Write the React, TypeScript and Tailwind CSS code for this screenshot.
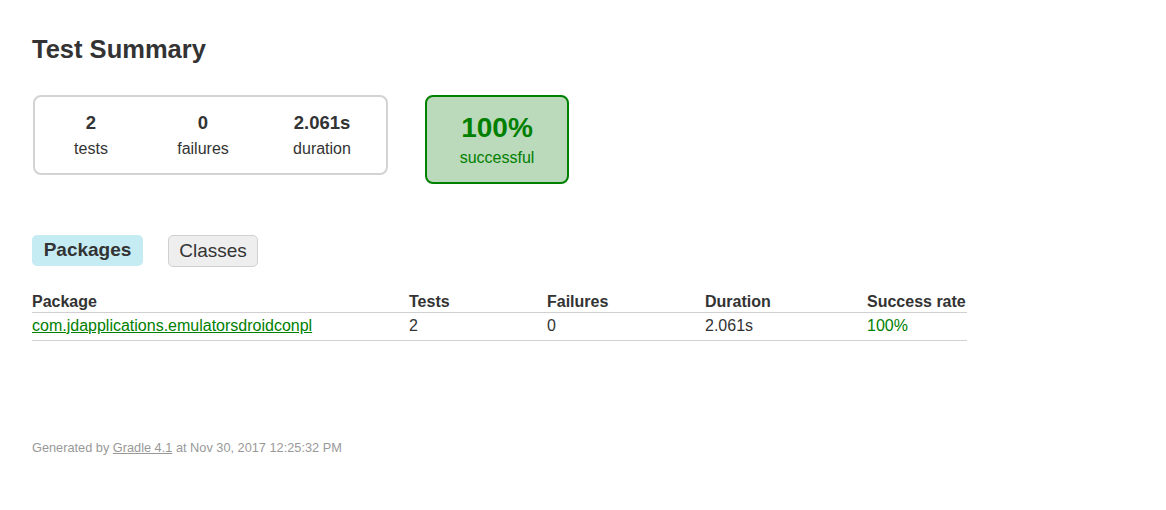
export default function App() {
  return (
    <div className="min-h-[510px] bg-white px-[32px] pt-[34px] font-['Liberation_Sans',Arial,sans-serif] text-[#333]">
      <h1 className="text-[25.5px] font-bold leading-[30px]">Test Summary</h1>

      <div className="mt-[31px] flex items-start gap-[37px]">
        <div className="ml-[1px] flex h-[80px] w-[355px] items-center rounded-[8px] border-2 border-[#d3d3d3]">
          <div className="w-[112px] text-center">
            <div className="text-[18.5px] font-bold leading-[22px]">2</div>
            <div className="mt-[5px] text-[16px] leading-[20px]">tests</div>
          </div>
          <div className="w-[112px] text-center">
            <div className="text-[18.5px] font-bold leading-[22px]">0</div>
            <div className="mt-[5px] text-[16px] leading-[20px]">failures</div>
          </div>
          <div className="w-[126px] text-center">
            <div className="text-[18.5px] font-bold leading-[22px]">2.061s</div>
            <div className="mt-[5px] text-[16px] leading-[20px]">duration</div>
          </div>
        </div>

        <div className="flex h-[89px] w-[144px] flex-col items-center justify-center rounded-[8px] border-2 border-[#008000] bg-[#bbd9bb] pt-[1px] text-[#008000]">
          <div className="text-[28px] font-bold leading-[30px]">100%</div>
          <div className="mt-[5px] text-[16px] leading-[20px]">successful</div>
        </div>
      </div>

      <div className="mt-[51px] flex items-start gap-[25px]">
        <div className="flex h-[31px] w-[111px] items-center justify-center rounded-[5px] bg-[#c5ecf3] text-[19px] font-bold">
          Packages
        </div>
        <div className="flex h-[32px] w-[90px] items-center justify-center rounded-[5px] border border-[#d0d0d0] bg-[#eeeeee] text-[19px]">
          Classes
        </div>
      </div>

      <table className="mt-[25px] w-[935px] border-collapse text-[16px]">
        <thead>
          <tr className="border-b border-[#d0d0d0] text-left">
            <th className="w-[377px] pb-0 font-bold leading-[20px]">Package</th>
            <th className="w-[138px] pb-0 font-bold leading-[20px]">Tests</th>
            <th className="w-[158px] pb-0 font-bold leading-[20px]">Failures</th>
            <th className="w-[162px] pb-0 font-bold leading-[20px]">Duration</th>
            <th className="pb-0 font-bold leading-[20px]">Success rate</th>
          </tr>
        </thead>
        <tbody>
          <tr className="border-b border-[#d0d0d0]">
            <td className="pt-[3px] pb-[4px] leading-[20px]">
              <a href="#" className="text-[#008000] underline">
                com.jdapplications.emulatorsdroidconpl
              </a>
            </td>
            <td className="pt-[3px] pb-[4px] leading-[20px]">2</td>
            <td className="pt-[3px] pb-[4px] leading-[20px]">0</td>
            <td className="pt-[3px] pb-[4px] leading-[20px]">2.061s</td>
            <td className="pt-[3px] pb-[4px] leading-[20px] text-[#008000]">100%</td>
          </tr>
        </tbody>
      </table>

      <p className="mt-[99px] text-[12.75px] leading-[16px] text-[#999]">
        Generated by{" "}
        <a href="#" className="text-[#999] underline">
          Gradle 4.1
        </a>{" "}
        at Nov 30, 2017 12:25:32 PM
      </p>
    </div>
  );
}
